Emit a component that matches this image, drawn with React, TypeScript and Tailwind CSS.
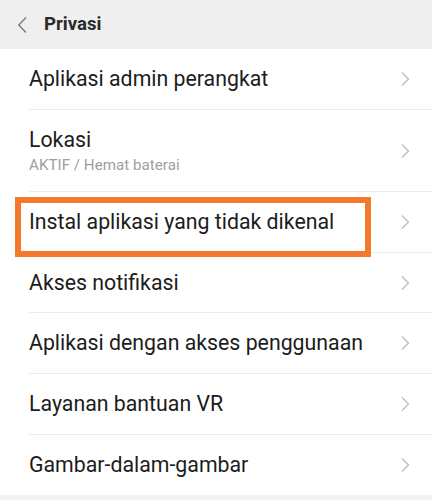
import React from "react";

const Chevron = () => (
  <svg width="10" height="16" viewBox="0 0 10 16" className="shrink-0">
    <path d="M2 1.5 L8.5 8 L2 14.5" fill="none" stroke="#bdbdbd" strokeWidth="1.3" />
  </svg>
);

type Item = { title: string; sub?: string; h: string; highlight?: boolean };

const items: Item[] = [
  { title: "Aplikasi admin perangkat", h: "h-[61px]" },
  { title: "Lokasi", sub: "AKTIF / Hemat baterai", h: "h-[82px]" },
  { title: "Instal aplikasi yang tidak dikenal", h: "h-[61px]", highlight: true },
  { title: "Akses notifikasi", h: "h-[60px]" },
  { title: "Aplikasi dengan akses penggunaan", h: "h-[61px]" },
  { title: "Layanan bantuan VR", h: "h-[61px]" },
  { title: "Gambar-dalam-gambar", h: "h-[60px]" },
];

export default function App() {
  return (
    <div
      className="w-[432px] h-[500px] bg-[#f2f2f2] overflow-hidden"
      style={{ fontFamily: "Roboto, 'Noto Sans', sans-serif" }}
    >
      <div className="h-[49px] bg-[#efefef] flex items-center pl-[17px]">
        <svg width="11" height="18" viewBox="0 0 11 18">
          <path d="M9 1.5 L1.8 9 L9 16.5" fill="none" stroke="#7a7a7a" strokeWidth="1.4" />
        </svg>
        <span className="ml-[16px] text-[18.6px] font-bold text-[#2a2a2a]">Privasi</span>
      </div>
      <div className="bg-white">
        {items.map((it, i) => (
          <div key={i} className={`relative ${it.h} pl-[29px]`}>
            <div
              className={`h-full flex items-center pr-[22px] ${
                i < items.length - 1 ? "border-b border-[#ececec]" : ""
              }`}
            >
              <div className="flex-1 flex flex-col">
                <span className="text-[21.3px] leading-[26px] text-[#1c1c1c]">{it.title}</span>
                {it.sub && (
                  <span className="text-[15.2px] leading-[20px] mt-[2px] text-[#a0a0a0]">{it.sub}</span>
                )}
              </div>
              <Chevron />
            </div>
            {it.highlight && (
              <div className="absolute left-[15px] top-[5px] w-[356px] h-[60px] border-[6px] border-[#f47a2b]" />
            )}
          </div>
        ))}
      </div>
    </div>
  );
}
